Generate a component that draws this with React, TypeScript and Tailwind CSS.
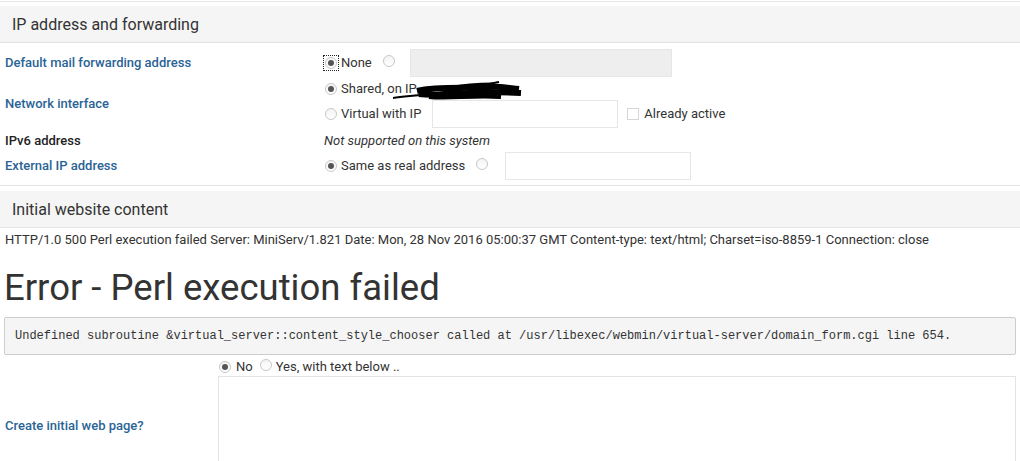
import React from "react";

// ── Small form bits ─────────────────────────────────────────────────
function Radio({ on, focus }: { on?: boolean; focus?: boolean }) {
  return (
    <span
      className={`inline-flex items-center justify-center w-[14px] h-[14px] shrink-0 ${
        focus ? "outline outline-1 outline-dotted outline-[#222]" : ""
      }`}
    >
      <span className="w-[12px] h-[12px] rounded-full border border-[#c8c8c8] bg-gradient-to-b from-[#f4f4f4] to-white flex items-center justify-center">
        {on && <span className="w-[6px] h-[6px] rounded-full bg-[#555]" />}
      </span>
    </span>
  );
}

function Label({ children, link = true }: { children: React.ReactNode; link?: boolean }) {
  return (
    <div
      className={`w-[324px] shrink-0 pl-[5px] text-[13px] font-medium ${
        link ? "text-[#2a6496]" : "text-[#222]"
      }`}
    >
      {children}
    </div>
  );
}

function Header({ title }: { title: string }) {
  return (
    <div className="h-[37px] bg-[#f5f5f5] border-b border-[#e3e3e3] flex items-center pl-[12px] pt-[2px] text-[16px] text-[#333]">
      {title}
    </div>
  );
}

// redaction scribble over the shared IP
function Scribble() {
  return (
    <svg className="absolute left-[-28px] top-[-14px]" width="136" height="24" viewBox="0 0 136 24">
      <path d="M4 19 C30 16 60 13 84 9 C96 6 104 4 110 3" stroke="#000" strokeWidth="2" fill="none" />
      <path d="M28 12 C50 7 80 10 100 8 C110 7 120 9 130 10" stroke="#000" strokeWidth="6" fill="none" />
      <path d="M30 15 C55 18 85 11 132 14" stroke="#000" strokeWidth="6" fill="none" />
      <path d="M40 18 C60 20 85 16 112 18" stroke="#000" strokeWidth="4" fill="none" />
      <path d="M60 9 C75 6 90 5 104 5" stroke="#000" strokeWidth="3" fill="none" />
    </svg>
  );
}

// ── Page ────────────────────────────────────────────────────────────
export default function App() {
  return (
    <div
      className="w-[1020px] h-[461px] overflow-hidden bg-white text-[#333]"
      style={{ fontFamily: "Roboto, 'Liberation Sans', sans-serif" }}
    >
      <div className="h-[2px] border-t border-[#e6e6e6] mt-[1px]" />
      <div className="mt-[3px]">
        <Header title="IP address and forwarding" />
      </div>

      {/* ── IP section ── */}
      <div className="border-b border-[#e3e3e3] pb-[5px]">
        {/* mail forwarding */}
        <div className="flex items-center h-[28px] mt-[6px]">
          <Label>Default mail forwarding address</Label>
          <div className="flex items-center text-[13px]">
            <Radio on focus />
            <span className="ml-[3px]">None</span>
            <span className="ml-[10px]"><Radio /></span>
            <div className="ml-[14px] w-[262px] h-[28px] bg-[#eeeeee] border border-[#e6e6e6]" />
          </div>
        </div>

        {/* network interface */}
        <div className="flex items-center mt-[3px]">
          <Label>Network interface</Label>
          <div className="flex flex-col text-[13px]">
            <div className="flex items-center h-[18px]">
              <Radio on />
              <span className="ml-[3px] relative">
                Shared, on IP
                <span className="relative inline-block w-[95px]">
                  <Scribble />
                </span>
              </span>
            </div>
            <div className="flex items-center h-[28px] mt-[2px]">
              <Radio />
              <span className="ml-[3px]">Virtual with IP</span>
              <div className="ml-[11px] w-[186px] h-[28px] border border-[#e6e6e6]" />
              <span className="ml-[9px] w-[12px] h-[12px] border border-[#d6d6d6]" />
              <span className="ml-[5px]">Already active</span>
            </div>
          </div>
        </div>

        {/* ipv6 */}
        <div className="flex items-center h-[18px] mt-[4px]">
          <Label link={false}>IPv6 address</Label>
          <span className="italic text-[13px]">Not supported on this system</span>
        </div>

        {/* external ip */}
        <div className="flex items-center h-[28px] mt-[2px]">
          <Label>External IP address</Label>
          <div className="flex items-center text-[13px]">
            <Radio on />
            <span className="ml-[3px]">Same as real address</span>
            <span className="ml-[10px]"><Radio /></span>
            <div className="ml-[16px] w-[186px] h-[28px] border border-[#e6e6e6]" />
          </div>
        </div>
      </div>

      {/* ── Initial website content ── */}
      <div className="mt-[5px]">
        <Header title="Initial website content" />
      </div>

      <div className="pl-[5px] mt-[4px] text-[13px] text-[#333] leading-[16px]">
        HTTP/1.0 500 Perl execution failed Server: MiniServ/1.821 Date: Mon, 28 Nov 2016 05:00:37 GMT
        Content-type: text/html; Charset=iso-8859-1 Connection: close
      </div>

      <h1 className="pl-[4px] mt-[18px] text-[36.5px] leading-[44px] text-[#333] font-normal">
        Error - Perl execution failed
      </h1>

      <div className="mx-[4px] mt-[7px] h-[38px] bg-[#f5f5f5] border border-[#cccccc] rounded-[2px] flex items-center pl-[10px]">
        <span
          className="text-[12px] text-[#333]"
          style={{ fontFamily: "'Liberation Mono', monospace" }}
        >
          Undefined subroutine &amp;virtual_server::content_style_chooser called at /usr/libexec/webmin/virtual-server/domain_form.cgi line 654.
        </span>
      </div>

      {/* ── Create initial web page ── */}
      <div className="flex mt-[3px]">
        <div className="w-[218px] shrink-0 pl-[5px] pt-[58px] text-[13px] font-medium text-[#2a6496]">
          Create initial web page?
        </div>
        <div className="flex-1 pr-[4px]">
          <div className="flex items-center h-[18px] text-[13px]">
            <Radio on />
            <span className="ml-[4px]">No</span>
            <span className="ml-[6px]"><Radio /></span>
            <span className="ml-[3px]">Yes, with text below ..</span>
          </div>
          <div className="h-[100px] border border-[#e3e3e3]" />
        </div>
      </div>
    </div>
  );
}
